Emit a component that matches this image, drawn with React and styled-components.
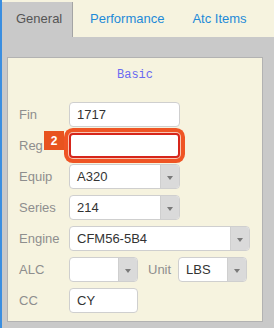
import React from 'react';
import styled, { createGlobalStyle } from 'styled-components';

const GlobalStyle = createGlobalStyle`
  html, body {
    margin: 0;
    padding: 0;
    width: 274px;
    height: 328px;
    overflow: hidden;
  }
  body {
    font-family: 'Liberation Sans', Arial, sans-serif;
  }
`;

const Frame = styled.div`
  width: 274px;
  height: 328px;
  box-sizing: border-box;
  border-left: 2px solid #3a8ee0;
  background: #c9c9c9;
  display: flex;
  flex-direction: column;
`;

const TabBar = styled.div`
  display: flex;
  height: 37px;
  background: #f6f3df;
  font-size: 13px;
`;

const Tab = styled.div`
  display: flex;
  align-items: center;
  box-sizing: border-box;
  white-space: nowrap;
  ${p =>
    p.$active
      ? `
    width: 71px;
    margin-top: 2px;
    padding: 0 0 3px 14px;
    background: #c9c9c9;
    color: #555;
    border-right: 1px solid #a4a4a4;
  `
      : `
    padding: 0 14px 1px;
    color: #1e8ad8;
  `}
  ${p => (p.$gap ? 'margin-left: 3px;' : '')}
`;

const Body = styled.div`
  flex: 1;
  padding: 20px 11px 6px 5px;
  display: flex;
`;

const Panel = styled.div`
  flex: 1;
  box-sizing: border-box;
  border: 1px solid #b2b2b2;
  background: #f6f3df;
  padding: 10px 0 0 11px;
  display: flex;
  flex-direction: column;
`;

const Legend = styled.div`
  font-family: 'Liberation Mono', 'Courier New', monospace;
  font-size: 12px;
  line-height: 14px;
  color: #6a6af2;
  text-align: center;
  padding-right: 11px;
  margin-bottom: 20px;
`;

const Form = styled.div`
  display: flex;
  flex-direction: column;
  gap: 6px;
`;

const Row = styled.div`
  position: relative;
  display: flex;
  align-items: center;
  height: 25px;
`;

const Label = styled.span`
  width: ${p => p.$w || 50}px;
  margin-left: ${p => p.$ml || 0}px;
  flex-shrink: 0;
  font-size: 13px;
  color: #8e8e8e;
`;

const Field = styled.div`
  box-sizing: border-box;
  width: ${p => p.$w}px;
  height: 25px;
  display: flex;
  align-items: center;
  background: #fff;
  border: 1px solid #cfcfcf;
  border-radius: 4px;
  font-size: 13px;
  color: #333;
  padding-left: 7px;
  ${p =>
    p.$flagged
      ? `
    border: 2px solid #d6261b;
    padding-left: 6px;
    box-shadow: 0 0 0 1px #f9c6b2, 0 0 0 5px #ef5424;
  `
      : ''}
`;

const Value = styled.span`
  flex: 1;
`;

const Drop = styled.span`
  align-self: stretch;
  width: 18px;
  border-left: 1px solid #cfcfcf;
  background: #dadada;
  border-radius: 0 3px 3px 0;
  display: flex;
  align-items: center;
  justify-content: center;

  &::after {
    content: '';
    margin-top: 3px;
    border-left: 3px solid transparent;
    border-right: 3px solid transparent;
    border-top: 4px solid #7a7a7a;
  }
`;

const Badge = styled.span`
  position: absolute;
  left: 25px;
  top: -2px;
  width: 20px;
  height: 19px;
  background: #e8531f;
  color: #fff;
  font-weight: bold;
  font-size: 12px;
  display: flex;
  align-items: center;
  justify-content: center;
`;

const Select = ({ w, value }) => (
  <Field $w={w} style={{ paddingRight: 0 }}>
    <Value>{value}</Value>
    <Drop />
  </Field>
);

export default function App() {
  return (
    <>
      <GlobalStyle />
      <Frame>
        <TabBar>
          <Tab $active>General</Tab>
          <Tab $gap>Performance</Tab>
          <Tab>Atc Items</Tab>
        </TabBar>
        <Body>
          <Panel>
            <Legend>Basic</Legend>
            <Form>
              <Row>
                <Label>Fin</Label>
                <Field $w={111}>1717</Field>
              </Row>
              <Row>
                <Label>Reg</Label>
                <Badge>2</Badge>
                <Field $w={111} $flagged />
              </Row>
              <Row>
                <Label>Equip</Label>
                <Select w={111} value="A320" />
              </Row>
              <Row>
                <Label>Series</Label>
                <Select w={111} value="214" />
              </Row>
              <Row>
                <Label>Engine</Label>
                <Select w={181} value="CFM56-5B4" />
              </Row>
              <Row>
                <Label>ALC</Label>
                <Select w={69} value="" />
                <Label $w={30} $ml={10}>Unit</Label>
                <Select w={69} value="LBS" />
              </Row>
              <Row>
                <Label>CC</Label>
                <Field $w={69}>CY</Field>
              </Row>
            </Form>
          </Panel>
        </Body>
      </Frame>
    </>
  );
}
